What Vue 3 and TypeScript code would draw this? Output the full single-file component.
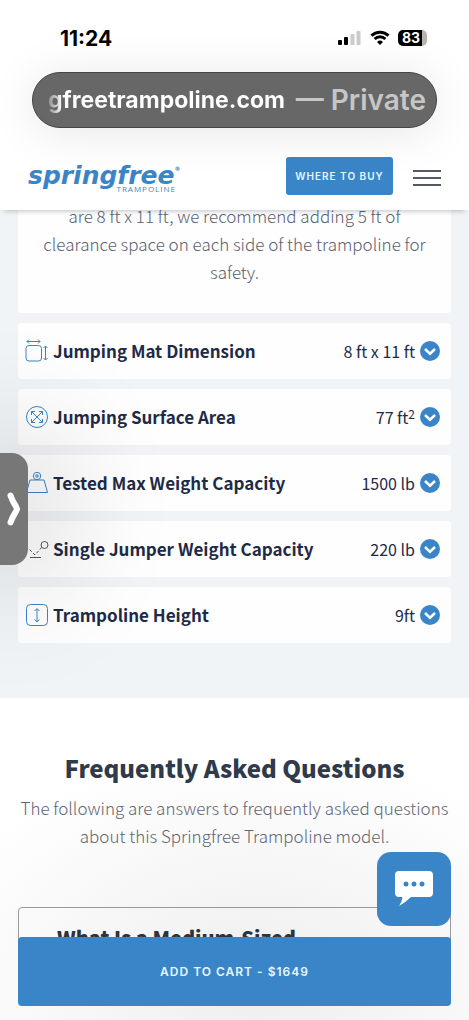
<script setup lang="ts">
interface Spec {
  icon: 'mat' | 'area' | 'weight' | 'jumper' | 'height'
  label: string
  value: string
  sup?: string
}

const specs: Spec[] = [
  { icon: 'mat', label: 'Jumping Mat Dimension', value: '8 ft x 11 ft' },
  { icon: 'area', label: 'Jumping Surface Area', value: '77 ft', sup: '2' },
  { icon: 'weight', label: 'Tested Max Weight Capacity', value: '1500 lb' },
  { icon: 'jumper', label: 'Single Jumper Weight Capacity', value: '220 lb' },
  { icon: 'height', label: 'Trampoline Height', value: '9ft' },
]
</script>

<template>
  <div class="page">
    <div class="status">
      <span class="time">11:24</span>
      <div class="indicators">
        <svg class="signal" width="24" height="16" viewBox="0 0 24 16" aria-hidden="true">
          <rect x="0" y="10" width="4" height="5" rx="1" />
          <rect x="6" y="7" width="4" height="8" rx="1" />
          <rect class="dim" x="12.5" y="4" width="4" height="11" rx="1" />
          <rect class="dim" x="18.5" y="1" width="4" height="14" rx="1" />
        </svg>
        <svg class="wifi" width="20" height="16" viewBox="0 0 20 16" aria-hidden="true">
          <path d="M1.5 5.6 A12.2 12.2 0 0 1 18.5 5.6" />
          <path d="M4.6 9 A7.8 7.8 0 0 1 15.4 9" />
          <path class="dot" d="M10 15 L7 12 A4.4 4.4 0 0 1 13 12 Z" />
        </svg>
        <span class="battery"><span class="level">83</span></span>
      </div>
    </div>

    <div class="address">
      <span class="host">gfreetrampoline.com</span>
      <span class="mode">— Private</span>
    </div>

    <header class="header">
      <a class="logo" href="#" aria-label="Springfree Trampoline">
        <span class="brand">springfree<i class="reg">®</i></span>
        <span class="sub">TRAMPOLINE</span>
      </a>
      <button class="buy" type="button">WHERE TO BUY</button>
      <button class="menu" type="button" aria-label="Menu"><i></i><i></i><i></i></button>
    </header>

    <section class="specs">
      <p class="note">are 8 ft x 11 ft, we recommend adding 5 ft of clearance space on each side of the trampoline for safety.</p>
      <button v-for="s in specs" :key="s.label" class="row" type="button">
        <svg class="icon" :class="s.icon" width="24" height="24" viewBox="0 0 24 24" aria-hidden="true">
          <template v-if="s.icon === 'mat'">
            <rect x="1" y="6.500" width="15.500" height="15.500" rx="3" />
            <path d="M2 2.500H15M4 .5L2 2.500L4 4.500M13 .5L15 2.500L13 4.500M20.500 7V21M18.500 9L20.500 7L22.500 9M18.500 19L20.500 21L22.500 19" />
          </template>
          <template v-else-if="s.icon === 'area'">
            <circle cx="12" cy="12" r="10.500" />
            <path d="M6.500 6.500L17.500 17.500M17.500 6.500L6.500 17.500M6.500 10V6.500H10M14 6.500H17.500V10M17.500 14V17.500H14M10 17.500H6.500V14" />
          </template>
          <template v-else-if="s.icon === 'weight'">
            <circle cx="12" cy="5" r="3.700" />
            <circle cx="12" cy="5" r="1.300" />
            <path d="M5 9H19L22.500 21.500H1.500Z" />
          </template>
          <template v-else-if="s.icon === 'jumper'">
            <circle cx="19.500" cy="8" r="3.500" />
            <path class="dash" d="M1 9L10 18L16.500 10.500" />
            <path d="M5 20.500H16" />
          </template>
          <template v-else>
            <rect x="1.500" y="1.500" width="21" height="21" rx="4" />
            <path d="M12 6V18.500M9.500 8L12 5.500L14.500 8M9.500 16.500L12 19L14.500 16.500" />
          </template>
        </svg>
        <span class="label">{{ s.label }}</span>
        <span class="value">{{ s.value }}<sup v-if="s.sup">{{ s.sup }}</sup></span>
        <svg class="chev" width="20" height="20" viewBox="0 0 20 20" aria-hidden="true">
          <circle cx="10" cy="10" r="10" />
          <path d="M5 8L10 12.700L15 8" />
        </svg>
      </button>
    </section>

    <section class="faq">
      <h2>Frequently Asked Questions</h2>
      <p>The following are answers to frequently asked questions about this Springfree Trampoline model.</p>
      <div class="question"><h3>What Is a Medium-Sized</h3></div>
    </section>

    <button class="drawer" type="button" aria-label="Show panel">
      <svg width="14" height="34" viewBox="0 0 14 34" aria-hidden="true"><path d="M3.500 3.500Q5.500 9 7.500 12T10 17Q9.500 19 7.500 22T3.500 30.500" /></svg>
    </button>
    <button class="chat" type="button" aria-label="Open chat">
      <svg width="38" height="36" viewBox="0 0 38 36" aria-hidden="true">
        <path d="M4 0H34Q38 0 38 4V22Q38 26 34 26H16Q11 31 4 35Q7 31 7.500 26H4Q0 26 0 22V4Q0 0 4 0Z" />
        <circle cx="11" cy="13" r="2.500" /><circle cx="19" cy="13" r="2.500" /><circle cx="27" cy="13" r="2.500" />
      </svg>
    </button>
    <button class="cart" type="button">ADD TO CART - $1649</button>
  </div>
</template>

<style>
body { margin: 0; background: #fff; }
</style>

<style scoped>
* { box-sizing: border-box; }
button { border: 0; padding: 0; margin: 0; font: inherit; color: inherit; cursor: pointer; }
svg { display: block; flex: none; }
.page {
  min-height: 100vh;
  overflow: hidden;
  font-family: "Noto Sans CJK SC", "Noto Sans", sans-serif;
  color: #1f2b46;
}
.status {
  height: 72px;
  padding: 4px 42px 0 60px;
  display: flex;
  align-items: center;
  justify-content: space-between;
  font-family: Inter, "Liberation Sans", sans-serif;
}
.time { font-size: 21px; font-weight: 700; color: #000; }
.indicators { display: flex; align-items: center; gap: 8px; }
.signal { fill: #000; }
.dim { fill: #ccc; }
.wifi { fill: none; stroke: #000; stroke-width: 3; }
.wifi .dot { fill: #000; stroke: none; }
.battery {
  display: block;
  width: 29px;
  height: 16px;
  border-radius: 5px;
  background: linear-gradient(90deg, #000 24px, #b5b5b5 24px);
}
.level { display: block; padding-left: 4px; color: #fff; font-size: 14px; line-height: 16px; font-weight: 700; }
.address {
  position: relative;
  z-index: 3;
  height: 56px;
  margin: 0 32px;
  padding: 0 10px 0 15px;
  border: 1px solid #444;
  border-radius: 28px;
  background: #676767;
  box-shadow: 0 4px 48px rgba(0, 0, 0, 0.1);
  display: flex;
  align-items: center;
  justify-content: space-between;
  white-space: nowrap;
  font-family: Inter, "Liberation Sans", sans-serif;
}
.host { font-size: 23px; font-weight: 700; background: linear-gradient(90deg, #8a8a8a, #fff 14px); background-clip: text; color: transparent; }
.mode { font-size: 28px; font-weight: 600; color: #c6c6c6; }
.header {
  position: relative;
  z-index: 2;
  height: 82px;
  padding: 14px 28px 0;
  display: flex;
  align-items: center;
  background: #fff;
  box-shadow: 0 5px 5px -4px rgba(40, 50, 70, 0.3);
}
.logo { display: flex; flex-direction: column; width: 152px; margin-top: 4px; color: #3a85c8; text-decoration: none; }
.brand { font: italic 700 25px/26px "DejaVu Sans", sans-serif; display: flex; }
.reg { font-size: 6px; line-height: 12px; }
.sub { align-self: flex-end; margin-top: -4px; padding-right: 4px; font: 400 8px/8px "Open Sans", sans-serif; letter-spacing: 1px; }
.buy {
  width: 107px;
  height: 38px;
  margin-left: auto;
  border-radius: 3px;
  background: #3a85c8;
  color: #e6f7ff;
  font: 600 10px/16px Inter, sans-serif;
  letter-spacing: 1px;
}
.menu { width: 28px; margin: 4px 0 0 20px; display: grid; gap: 5px; background: none; }
.menu i { height: 2px; background: #555a64; }
.specs {
  margin-top: -8px;
  padding: 0 18px 55px;
  display: grid;
  gap: 10px;
  background: #f1f4f6;
}
.note {
  margin: 0;
  padding: 0 20px 27px;
  border-radius: 0 0 4px 4px;
  background: #fefefe;
  color: #596170;
  font-size: 17px;
  line-height: 28px;
  font-weight: 300;
  text-align: center;
}
.row {
  width: 100%;
  height: 56px;
  padding: 0 11px 0 7px;
  border-radius: 4px;
  display: flex;
  align-items: center;
  background: #fefefe;
  text-align: left;
  white-space: nowrap;
}
.icon { fill: none; stroke: #3a85c8; stroke-width: 1; }
.icon.jumper { stroke: #555; }
.dash { stroke-dasharray: 3 2; }
.label { margin-left: 4px; font-size: 17px; font-weight: 700; line-height: 24px; }
.value { margin-left: auto; font-size: 16px; line-height: 24px; }
.value sup { font-size: 12px; line-height: 0; vertical-align: 5px; }
.chev { margin-left: 5px; fill: #3a85c8; }
.chev path { fill: none; stroke: #fff; stroke-width: 2.500; }
.faq {
  padding: 50px 18px 20px;
  text-align: center;
  background: radial-gradient(ellipse 75% 75% at 55% 90%, #eee, #fff);
}
h2 { margin: 0; color: #2f3a4a; font-size: 24px; line-height: 40px; font-weight: 900; }
.faq p { margin: 6px 0 0; color: #5f6673; font-size: 17px; line-height: 28px; font-weight: 300; }
.question { margin-top: 57px; height: 93px; padding: 12px 38px; border: 1px solid #999; border-radius: 4px; text-align: left; }
h3 { margin: 0; color: #2b3441; font-size: 20px; line-height: 36px; font-weight: 900; }
.drawer {
  position: fixed;
  z-index: 4;
  left: 0;
  top: 453px;
  width: 28px;
  height: 112px;
  padding-left: 7px;
  border-radius: 0 16px 16px 0;
  background: #777;
  box-shadow: 0 0 120px 20px rgba(0, 0, 0, 0.22);
}
.drawer path { fill: none; stroke: #fff; stroke-width: 6; stroke-linecap: round; stroke-linejoin: round; }
.chat {
  position: fixed;
  z-index: 4;
  right: 18px;
  bottom: 94px;
  width: 74px;
  height: 74px;
  border-radius: 14px;
  background: #3a85c8;
  display: grid;
  place-items: center;
}
.chat path { fill: #fff; }
.chat circle { fill: #3a85c8; }
.cart {
  position: fixed;
  z-index: 3;
  left: 18px;
  right: 18px;
  bottom: 14px;
  height: 69px;
  border-radius: 4px;
  background: #3a85c8;
  color: #e6f7ff;
  font: 600 12px/20px Inter, sans-serif;
  letter-spacing: 1px;
}
</style>
